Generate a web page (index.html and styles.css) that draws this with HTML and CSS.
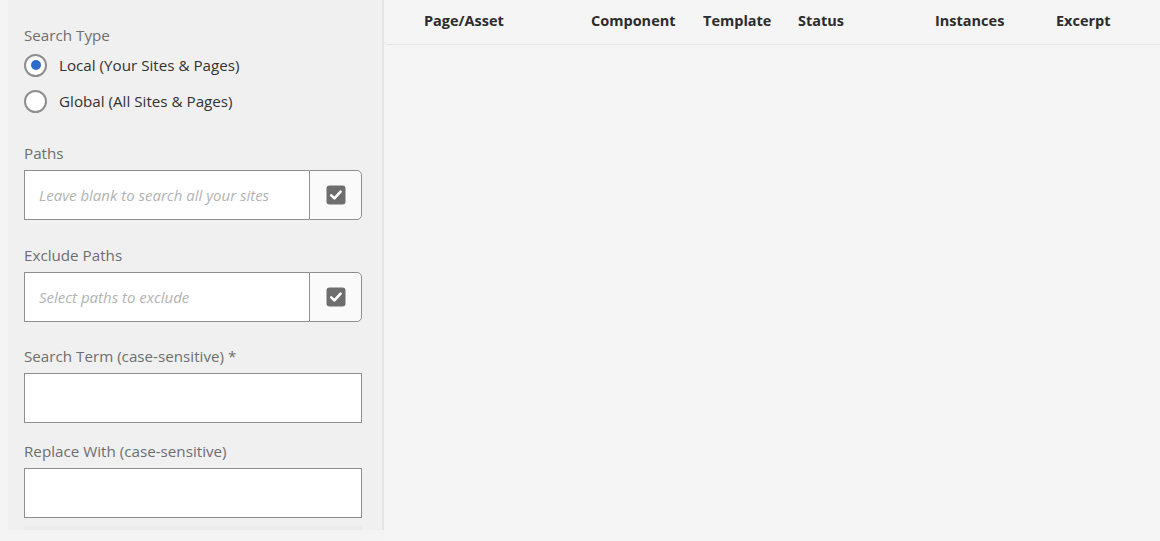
FILE: index.html
```html
<!DOCTYPE html>
<html>
<head>
<meta charset="utf-8">
<link rel="stylesheet" href="styles.css">
</head>
<body>
<div class="page">
  <aside class="panel">
    <div class="label first">Search Type</div>
    <label class="radio r1"><span class="dot checked"></span><span>Local (Your Sites &amp; Pages)</span></label>
    <label class="radio"><span class="dot"></span><span>Global (All Sites &amp; Pages)</span></label>

    <div class="label l-paths">Paths</div>
    <div class="picker">
      <div class="field ph">Leave blank to search all your sites</div>
      <div class="btn"><span class="chk"><svg viewBox="0 0 20 20" width="20" height="20"><rect x="0.5" y="0.5" width="19" height="19" rx="3" fill="#6e6e6e"/><path d="M5.2 10.4 L8.4 13.4 L14.6 6.6" fill="none" stroke="#fff" stroke-width="2.6" stroke-linecap="round" stroke-linejoin="round"/></svg></span></div>
    </div>

    <div class="label l-excl">Exclude Paths</div>
    <div class="picker">
      <div class="field ph">Select paths to exclude</div>
      <div class="btn"><span class="chk"><svg viewBox="0 0 20 20" width="20" height="20"><rect x="0.5" y="0.5" width="19" height="19" rx="3" fill="#6e6e6e"/><path d="M5.2 10.4 L8.4 13.4 L14.6 6.6" fill="none" stroke="#fff" stroke-width="2.6" stroke-linecap="round" stroke-linejoin="round"/></svg></span></div>
    </div>

    <div class="label l-term">Search Term (case-sensitive) *</div>
    <div class="textbox"></div>

    <div class="label l-repl">Replace With (case-sensitive)</div>
    <div class="textbox"></div>
    <div class="fade"></div>
  </aside>
  <main class="results">
    <div class="thead">
      <div>Page/Asset</div>
      <div>Component</div>
      <div>Template</div>
      <div>Status</div>
      <div>Instances</div>
      <div>Excerpt</div>
    </div>
  </main>
</div>
</body>
</html>
```

FILE: styles.css
```css
html, body {
  margin: 0;
  padding: 0;
  height: 100%;
}
body {
  background: #f4f4f4;
  font-family: "Open Sans", "Noto Sans", sans-serif;
  overflow: hidden;
}
.page {
  display: flex;
  height: 541px;
  padding-left: 8px;
}
.panel {
  width: 338px;
  height: 530px;
  background: #f0f0f0;
  padding: 0 20px 0 16px;
  box-sizing: content-box;
  display: flex;
  flex-direction: column;
  border-right: 2px solid #e5e5e5;
}
.label {
  font-size: 15.2px;
  line-height: 20px;
  color: #6e6e6e;
}
.first { margin-top: 25px; }
.radio {
  display: flex;
  align-items: center;
  height: 36px;
  font-size: 15.2px;
  color: #323232;
}
.r1 { margin-top: 2px; }
.dot {
  width: 19px;
  height: 19px;
  border: 2px solid #8e8e8e;
  border-radius: 50%;
  background: #fff;
  margin-right: 12px;
  position: relative;
  flex: none;
}
.dot.checked::after {
  content: "";
  position: absolute;
  left: 4.5px;
  top: 4.5px;
  width: 10px;
  height: 10px;
  border-radius: 50%;
  background: #2d6bcc;
}
.l-paths { margin-top: 24px; margin-bottom: 7px; }
.l-excl { margin-top: 25px; margin-bottom: 7px; }
.l-term { margin-top: 24px; margin-bottom: 7px; }
.l-repl { margin-top: 18px; margin-bottom: 7px; }
.picker {
  display: flex;
  height: 50px;
}
.field {
  flex: 1;
  background: #fff;
  border: 1px solid #8e8e8e;
  border-right: none;
  display: flex;
  align-items: center;
  padding-left: 14px;
}
.ph {
  font-size: 15px;
  font-style: italic;
  color: #b3b3b3;
}
.btn {
  width: 51px;
  border: 1px solid #8e8e8e;
  border-radius: 0 5px 5px 0;
  background: #fafafa;
  display: flex;
  align-items: center;
  justify-content: center;
}
.chk { display: flex; }
.textbox {
  height: 48px;
  background: #fff;
  border: 1px solid #8e8e8e;
}
.fade {
  height: 4px;
  margin-top: 8px;
  background: #ebebeb;
}
.results {
  flex: 1;
  background: #f5f5f5;
}
.thead {
  display: grid;
  grid-template-columns: 167px 112px 95px 137px 121px 1fr;
  height: 41px;
  align-items: center;
  padding-left: 40px;
  padding-bottom: 3px;
  border-bottom: 1px solid #e6e6e6;
  border-radius: 0 0 0 4px;
  font-size: 14.5px;
  font-weight: 700;
  color: #2c2c2c;
}
```
